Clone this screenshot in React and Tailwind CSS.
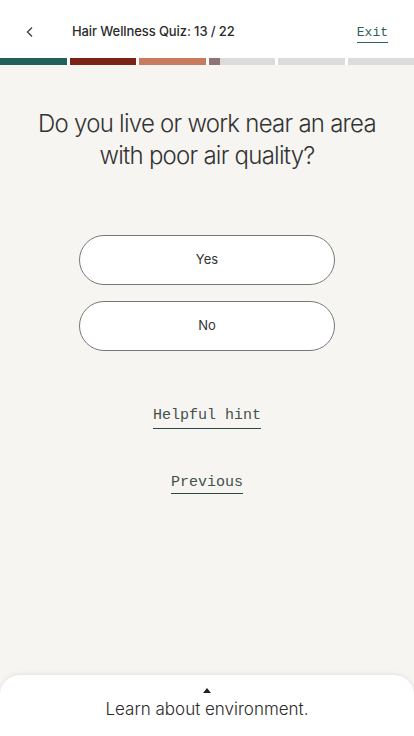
import React from 'react';

const SEGMENTS = [
  { fill: 100, color: 'bg-[#22625b]' },
  { fill: 100, color: 'bg-[#7b2415]' },
  { fill: 100, color: 'bg-[#c97b60]' },
  { fill: 17, color: 'bg-[#8e7479]' },
  { fill: 0, color: '' },
  { fill: 0, color: '' }
];

const App = () => {
  return (
    <div className="min-h-screen h-[736px] flex flex-col bg-[#f6f5f1] font-['Inter',sans-serif] text-[#333]">
      {/* Header */}
      <div className="bg-white">
        <div className="h-[58px] flex items-center pt-[5px] pl-[24px] pr-[26px]">
          <button className="w-[14px] flex items-center text-[#444]">
            <svg className="w-[12px] h-[12px]" viewBox="0 0 12 12" fill="none" stroke="currentColor" strokeWidth="1.4">
              <path d="M8 1.5L3.5 6L8 10.5" />
            </svg>
          </button>
          <h1 className="ml-[34px] text-[13px] font-medium text-[#2b2b2b] tracking-[-0.1px]">
            Hair Wellness Quiz: 13 / 22
          </h1>
          <a className="ml-auto mt-[4px] font-['Liberation_Mono',monospace] text-[13px] text-[#2e5f5a] border-b border-[#2e5f5a] leading-[16px] pb-[1px]">
            Exit
          </a>
        </div>
        <div className="flex gap-[3px] h-[7px] bg-white">
          {SEGMENTS.map((s, i) => (
            <div key={i} className="flex-1 bg-[#dcdcdb] flex">
              <div className={s.color} style={{ width: `${s.fill}%` }} />
            </div>
          ))}
        </div>
      </div>

      {/* Question */}
      <div className="flex flex-col items-center px-[12px]">
        <h2 className="mt-[43px] text-[24px] leading-[32px] font-light text-center text-[#333] tracking-[-0.75px]">
          Do you live or work near an area<br />with poor air quality?
        </h2>

        <div className="mt-[63px] flex flex-col gap-[16px] w-[256px]">
          <button className="h-[50px] rounded-full border border-[#777] bg-white text-[13px] text-[#333]">
            Yes
          </button>
          <button className="h-[50px] rounded-full border border-[#777] bg-white text-[13px] text-[#333]">
            No
          </button>
        </div>

        <a className="mt-[56px] font-['Liberation_Mono',monospace] text-[15px] text-[#44504e] border-b border-[#2d4a47] leading-[18px] pb-[3px]">
          Helpful hint
        </a>
        <a className="mt-[45px] font-['Liberation_Mono',monospace] text-[15px] text-[#44504e] border-b border-[#2d4a47] leading-[18px] pb-[1px]">
          Previous
        </a>
      </div>

      {/* Bottom sheet */}
      <div className="mt-auto h-[61px] bg-white rounded-t-[20px] shadow-[0_-1px_4px_rgba(0,0,0,0.08)] flex flex-col items-center pt-[13px]">
        <svg className="w-[8px] h-[5px] text-[#222]" viewBox="0 0 8 5" fill="currentColor">
          <path d="M4 0L8 5H0z" />
        </svg>
        <p className="mt-[5px] text-[17px] leading-[22px] font-light text-[#2b2b2b]">
          Learn about environment.
        </p>
      </div>
    </div>
  );
};

export default App;
